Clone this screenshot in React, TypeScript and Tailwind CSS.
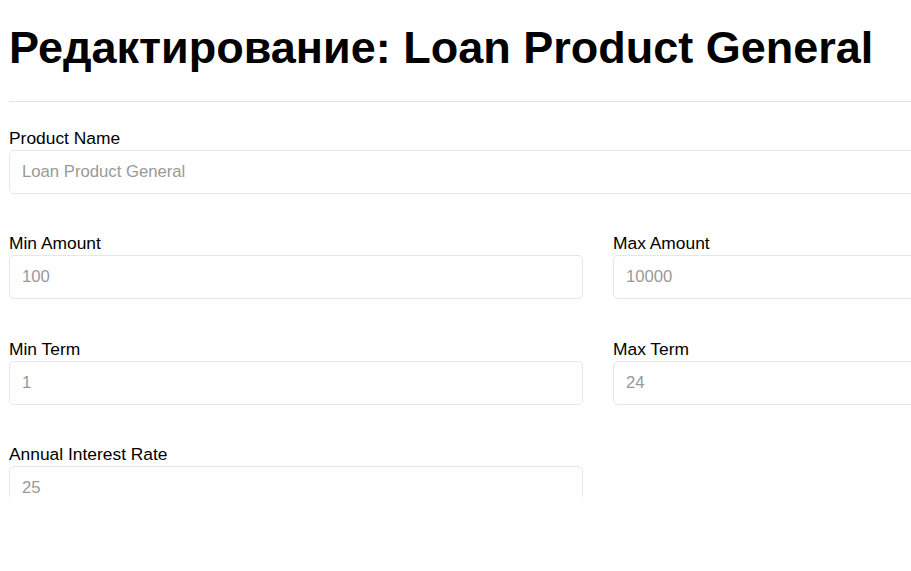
import React from "react";

type FieldProps = {
  label: string;
  value: string;
};

function Field({ label, value }: FieldProps) {
  return (
    <div className="mb-[41.33px]">
      <label className="block mb-[3px] text-[17.4px] leading-[17px] text-black">{label}</label>
      <input
        type="text"
        placeholder={value}
        readOnly
        className="block w-full h-[44px] px-[12px] rounded-[5px] border border-[#e6e6e6] bg-white text-[16.7px] placeholder:text-[#999999] outline-none"
      />
    </div>
  );
}

export default function App() {
  return (
    <div className="w-full h-[571px] overflow-hidden bg-white font-['Liberation_Sans',Arial,sans-serif]">
      <div className="w-[1178px] ml-[9px] h-[497px] overflow-hidden pt-[26px]">
        <h1 className="text-[45px] leading-[44px] font-bold text-black whitespace-nowrap">
          Редактирование: Loan Product General
        </h1>
        <hr className="mt-[31px] mb-[28px] border-0 border-t border-[#e3e3e3]" />

        <Field label="Product Name" value="Loan Product General" />

        <div className="grid grid-cols-2 gap-x-[30px]">
          <Field label="Min Amount" value="100" />
          <Field label="Max Amount" value="10000" />
          <Field label="Min Term" value="1" />
          <Field label="Max Term" value="24" />
          <Field label="Annual Interest Rate" value="25" />
        </div>
      </div>
    </div>
  );
}
